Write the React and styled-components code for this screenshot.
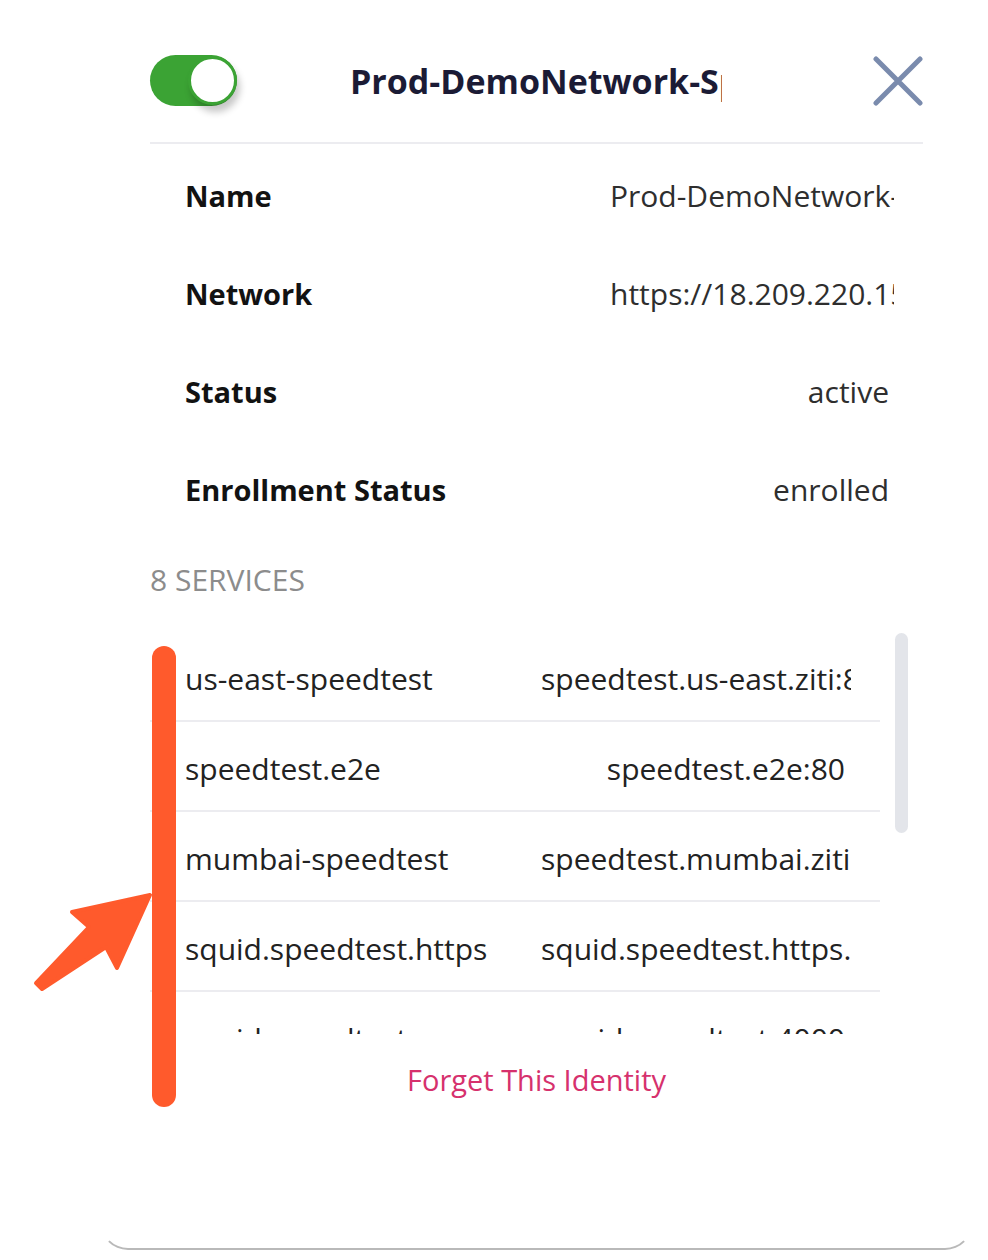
import React from "react";
import styled, { createGlobalStyle } from "styled-components";

const Global = createGlobalStyle`
  html, body { margin: 0; padding: 0; background: #ffffff; }
  body { font-family: "Open Sans", "Noto Sans", sans-serif; }
  * { box-sizing: border-box; }
`;

const Page = styled.div`
  position: relative;
  display: flow-root;
  width: 988px;
  height: 1260px;
  padding-left: 100px;
  overflow: hidden;
`;

const Card = styled.div`
  margin-top: -12px;
  width: 873px;
  height: 1262px;
  border: 2px solid #b9b9b9;
  border-left-color: transparent;
  border-right-color: transparent;
  border-radius: 28px;
  background: #fff;
  padding: 0 48px;
  display: flex;
  flex-direction: column;
`;

const Header = styled.div`
  display: flex;
  align-items: center;
  padding-top: 65px;
  height: 116px;
`;

const Toggle = styled.div`
  position: relative;
  flex: none;
  width: 87px;
  height: 51px;
  border-radius: 26px;
  background: #3ba334;
`;

const Knob = styled.div`
  position: absolute;
  right: 0;
  top: 1px;
  width: 49px;
  height: 49px;
  border-radius: 50%;
  background: #fff;
  border: 3px solid #3ba334;
  box-shadow: 3px 7px 7px rgba(0, 0, 0, 0.22);
`;

const Title = styled.div`
  flex: none;
  width: 372px;
  margin-left: 113px;
  overflow: hidden;
  white-space: nowrap;
  font-size: 34px;
  font-weight: 700;
  color: #1b1b35;
`;

const CloseButton = styled.button`
  margin-left: auto;
  width: 50px;
  height: 51px;
  padding: 0;
  border: none;
  background: none;
  display: flex;
  align-items: center;
  justify-content: center;
`;

const Divider = styled.div`
  margin-top: 36px;
  height: 2px;
  background: #ececf0;
`;

const InfoList = styled.div`
  margin-top: 2px;
  display: flex;
  flex-direction: column;
`;

const InfoRow = styled.div`
  display: flex;
  align-items: center;
  height: 98px;
  padding: 0 29px 0 35px;
`;

const Label = styled.div`
  flex: 1;
  font-size: 29px;
  font-weight: 700;
  color: #121212;
`;

const Value = styled.div`
  width: 284px;
  padding-right: 5px;
  overflow: hidden;
  white-space: nowrap;
  text-align: right;
  font-size: 30px;
  color: #2e2e2e;
`;

const SectionTitle = styled.div`
  margin-top: 24px;
  line-height: 36px;
  font-size: 30px;
  color: #8c8c8c;
`;

const ListArea = styled.div`
  margin-top: 34px;
  display: flex;
  gap: 15px;
  height: 402px;
`;

const ServiceList = styled.div`
  width: 730px;
  height: 100%;
  overflow: hidden;
`;

const ServiceRow = styled.div`
  display: flex;
  align-items: center;
  height: 90px;
  padding: 5px 29px 0 35px;
  border-bottom: 2px solid #ececf0;
`;

const ServiceName = styled.div`
  flex: 1;
  overflow: hidden;
  white-space: nowrap;
  font-size: 30px;
  color: #222;
`;

const ServiceAddr = styled.div`
  width: 310px;
  padding-right: 6px;
  overflow: hidden;
  white-space: nowrap;
  text-align: right;
  font-size: 30px;
  color: #222;
`;

const ScrollTrack = styled.div`
  width: 13px;
  padding-top: 1px;
`;

const ScrollThumb = styled.div`
  height: 200px;
  border-radius: 7px;
  background: #e3e5ea;
`;

const ForgetLink = styled.div`
  margin-top: 26px;
  text-align: center;
  font-size: 29px;
  color: #d6316d;
  line-height: 40px;
`;

const MarkerBar = styled.div`
  position: absolute;
  left: 152px;
  top: 646px;
  width: 24px;
  height: 461px;
  border-radius: 12px;
  background: #ff5a2c;
`;

const ArrowSvg = styled.svg`
  position: absolute;
  left: 0;
  top: 860px;
  width: 200px;
  height: 160px;
`;

const services = [
  ["us-east-speedtest", "speedtest.us-east.ziti:8080"],
  ["speedtest.e2e", "speedtest.e2e:80"],
  ["mumbai-speedtest", "speedtest.mumbai.ziti:8080"],
  ["squid.speedtest.https", "squid.speedtest.https.ziti:443"],
  ["squid.speedtest", "squid.speedtest:4000"],
];

const info = [
  ["Name", "Prod-DemoNetwork-Speedtest"],
  ["Network", "https://18.209.220.155:443"],
  ["Status", "active"],
  ["Enrollment Status", "enrolled"],
];

export default function App() {
  return (
    <Page>
      <Global />
      <Card>
        <Header>
          <Toggle>
            <Knob />
          </Toggle>
          <Title>Prod-DemoNetwork-Speedtest</Title>
          <CloseButton aria-label="Close">
            <svg width="50" height="50" viewBox="0 0 50 50">
              <path d="M3 3 L47 47 M47 3 L3 47" stroke="#7a8bad" strokeWidth="5" strokeLinecap="round" />
            </svg>
          </CloseButton>
        </Header>
        <Divider />
        <InfoList>
          {info.map(([k, v]) => (
            <InfoRow key={k}>
              <Label>{k}</Label>
              <Value>{v}</Value>
            </InfoRow>
          ))}
        </InfoList>
        <SectionTitle>8 SERVICES</SectionTitle>
        <ListArea>
          <ServiceList>
            {services.map(([n, a]) => (
              <ServiceRow key={n}>
                <ServiceName>{n}</ServiceName>
                <ServiceAddr>{a}</ServiceAddr>
              </ServiceRow>
            ))}
          </ServiceList>
          <ScrollTrack>
            <ScrollThumb />
          </ScrollTrack>
        </ListArea>
        <ForgetLink>Forget This Identity</ForgetLink>
      </Card>
      <MarkerBar />
      <ArrowSvg viewBox="0 860 200 160">
        <path
          d="M150 895 L72 912 L89 927 L36 983 L42 989 L106 947 L117 968 Z"
          fill="#ff5a2c"
          stroke="#ff5a2c"
          strokeWidth="4"
          strokeLinejoin="round"
        />
      </ArrowSvg>
    </Page>
  );
}
